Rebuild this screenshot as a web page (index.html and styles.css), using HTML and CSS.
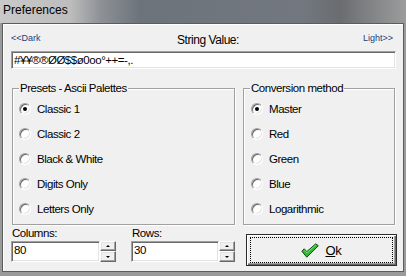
FILE: index.html
```html
<!DOCTYPE html>
<html lang="en">
<head>
  <meta charset="UTF-8" />
  <title>Preferences</title>
  <link rel="stylesheet" href="styles.css">
</head>
<body>
  <div class="titlebar">Preferences</div>

  <div class="frame">
    <div class="dialog">
      <div class="string-head">
        <span class="shade">&lt;&lt;Dark</span>
        <span class="head-title">String Value:</span>
        <span class="shade light">Light&gt;&gt;</span>
      </div>
      <div class="textbox wide">#¥¥®®ØØ$$ø0oo°++=-,.</div>

      <div class="groups">
        <fieldset class="group presets">
          <legend>Presets - Ascii Palettes</legend>
          <label class="option"><span class="radio checked"></span>Classic 1</label>
          <label class="option"><span class="radio"></span>Classic 2</label>
          <label class="option"><span class="radio"></span>Black &amp; White</label>
          <label class="option"><span class="radio"></span>Digits Only</label>
          <label class="option"><span class="radio"></span>Letters Only</label>
        </fieldset>

        <fieldset class="group method">
          <legend>Conversion method</legend>
          <label class="option"><span class="radio checked"></span>Master</label>
          <label class="option"><span class="radio"></span>Red</label>
          <label class="option"><span class="radio"></span>Green</label>
          <label class="option"><span class="radio"></span>Blue</label>
          <label class="option"><span class="radio"></span>Logarithmic</label>
        </fieldset>
      </div>

      <div class="bottom-row">
        <div class="field columns">
          <div class="field-label">Columns:</div>
          <div class="spin">
            <div class="textbox">80</div>
            <div class="spin-buttons">
              <span class="spin-btn up"><i></i></span>
              <span class="spin-btn down"><i></i></span>
            </div>
          </div>
        </div>

        <div class="field rows">
          <div class="field-label">Rows:</div>
          <div class="spin">
            <div class="textbox">30</div>
            <div class="spin-buttons">
              <span class="spin-btn up"><i></i></span>
              <span class="spin-btn down"><i></i></span>
            </div>
          </div>
        </div>

        <button class="ok-btn">
          <span class="focus">
            <svg class="check" width="18" height="15" viewBox="0 0 18 15">
              <path d="M0.8 8.2 L3.2 5.8 L5.8 8.6 L14.8 0.8 L17.3 2.8 L5.8 14.2 Z" fill="#2dbb2d" stroke="#0c4f0c" stroke-width="1" stroke-linejoin="round"/>
              <path d="M3.4 7.2 L5.8 9.8 L15 1.9" fill="none" stroke="#8fe88f" stroke-width="0.8"/>
            </svg>
            <span><u>O</u>k</span>
          </span>
        </button>
      </div>
    </div>
  </div>
</body>
</html>
```

FILE: styles.css
```css
* {
  box-sizing: border-box;
}

body {
  margin: 0;
  width: 406px;
  height: 276px;
  overflow: hidden;
  background: #999a9b;
  font-family: "Liberation Sans", Arial, sans-serif;
  font-size: 11.5px;
  letter-spacing: -0.45px;
  color: #000;
}

.titlebar {
  height: 23px;
  padding: 3px 0 0 3px;
  font-size: 12px;
  line-height: 14px;
  letter-spacing: 0;
  background: linear-gradient(90deg, #c9c9c9 0, #bdbdbd 70px, #8e9297 100px, #6d737b 140px, #737880 300px, #6a6d70 340px, #9c9c9c 406px);
}

.frame {
  padding: 0 2px;
}

.dialog {
  height: 249px;
  border: 1px solid #5c5c5c;
  background: #f0f0f0;
  box-shadow: inset 1px 1px #fff;
  padding: 8px 6px 6px 8px;
}

.string-head {
  display: grid;
  grid-template-columns: 1fr auto 1fr;
  height: 16px;
  margin-bottom: 3px;
}

.shade {
  font-size: 9px;
  line-height: 12px;
  letter-spacing: 0;
  color: #1e3c78;
}

.shade.light {
  justify-self: end;
  margin-right: 4px;
}

.head-title {
  font-size: 12px;
  line-height: 16px;
  margin-left: 8px;
}

.textbox {
  background: #fff;
  border: 1px solid;
  border-color: #a0a0a0 #fff #fff #a0a0a0;
  box-shadow: inset 1px 1px #696969, inset -1px -1px #e3e3e3;
  padding: 0 2px;
  white-space: nowrap;
}

.textbox.wide {
  height: 18px;
  line-height: 16px;
  margin-right: 1px;
}

.groups {
  display: flex;
  gap: 8px;
  margin-top: 12px;
  padding-left: 1px;
}

.group {
  margin: 0;
  padding: 0 0 3px;
  border: 1px solid #a0a0a0;
  box-shadow: inset 1px 1px #fff, 1px 1px #fff;
}

.group legend {
  margin-left: 6px;
  padding: 0 1px;
  line-height: 15px;
}

.presets {
  width: 223px;
}

.method {
  width: 152px;
}

.option {
  display: flex;
  align-items: center;
  gap: 6px;
  height: 25px;
  padding-left: 6px;
}

.method .option {
  padding-left: 7px;
}

.radio {
  flex: none;
  width: 12px;
  height: 12px;
  border-radius: 50%;
  background: #fff;
  border: 1px solid;
  border-color: #a0a0a0 #fff #fff #a0a0a0;
  box-shadow: inset 1px 1px #696969, inset -1px -1px #e3e3e3;
  display: flex;
  align-items: center;
  justify-content: center;
}

.radio.checked::after {
  content: "";
  width: 4px;
  height: 4px;
  border-radius: 50%;
  background: #000;
}

.bottom-row {
  display: flex;
  align-items: flex-start;
  margin-top: 1px;
}

.field.columns {
  width: 105px;
}

.field.rows {
  width: 104px;
  margin-left: 15px;
}

.field-label {
  height: 15px;
  line-height: 14px;
  padding-left: 1px;
}

.spin {
  display: flex;
  height: 21px;
}

.spin .textbox {
  flex: 1;
  line-height: 17px;
}

.spin-buttons {
  width: 16px;
  display: flex;
  flex-direction: column;
}

.spin-btn {
  display: flex;
  align-items: center;
  justify-content: center;
  background: #f0f0f0;
  border: 1px solid;
  border-color: #fff #696969 #696969 #fff;
  box-shadow: inset -1px -1px #a0a0a0, inset 1px 1px #e3e3e3;
}

.spin-btn.up {
  height: 10px;
}

.spin-btn.down {
  height: 11px;
}

.spin-btn i {
  width: 0;
  height: 0;
  border: 2px solid transparent;
}

.spin-btn.up i {
  border-top: 0;
  border-bottom-color: #000;
}

.spin-btn.down i {
  border-bottom: 0;
  border-top-color: #000;
}

.ok-btn {
  flex: none;
  width: 151px;
  height: 32px;
  margin: 8px 0 0 11px;
  padding: 2px 3px;
  background: #f0f0f0;
  border: 1px solid #2b2b2b;
  box-shadow: inset 1px 1px #fff, inset -1px -1px #696969, inset -2px -2px #a0a0a0;
  font-family: inherit;
  font-size: 13px;
  letter-spacing: -0.3px;
  color: #000;
}

.focus {
  display: flex;
  align-items: center;
  justify-content: center;
  gap: 6px;
  height: 100%;
  padding-top: 1px;
  border: 1px dotted #000;
}

.focus u {
  text-decoration-thickness: 1px;
}
```
